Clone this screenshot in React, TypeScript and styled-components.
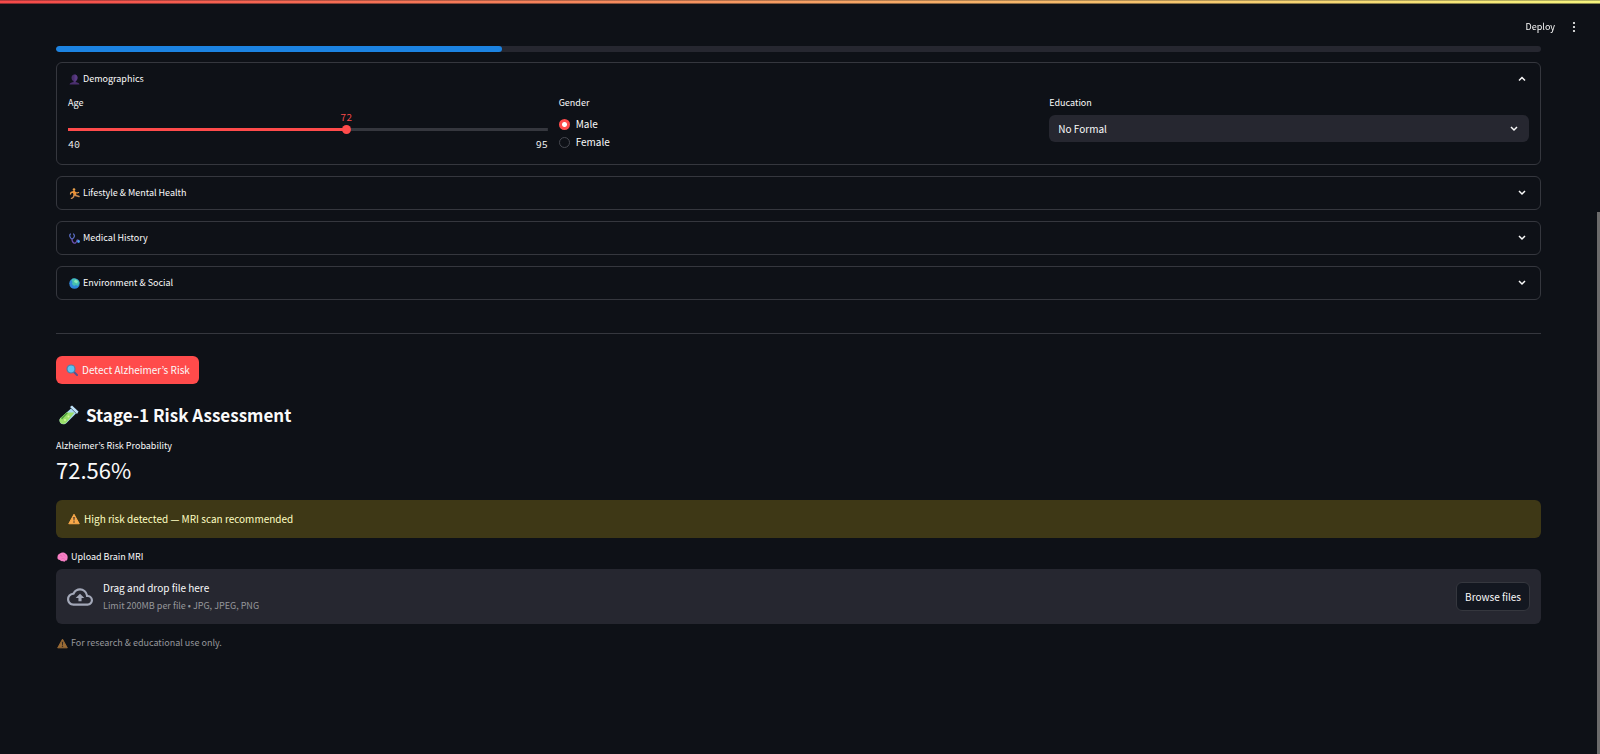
import React, { useRef, useState } from "react";
import styled, { createGlobalStyle } from "styled-components";

const sans = `"Source Sans Pro", "Noto Sans CJK KR", "Noto Sans", sans-serif`;
const mono = `"Source Code Pro", "DejaVu Sans Mono", monospace`;

const color = {
  page: "#0e1117",
  text: "#fafafa",
  primary: "#ff4b4b",
  border: "#35373e",
  surface: "#262730",
  info: "#1c83e1",
  muted: "#96979b",
};

const GlobalStyle = createGlobalStyle`
  *, *::before, *::after { box-sizing: border-box; }
  html { background: ${color.page}; scrollbar-width: none; }
  body { margin: 0; background: ${color.page}; color: ${color.text}; font-family: ${sans}; font-size: 10px; line-height: 16px; }
  button, select, input { font: inherit; color: inherit; }
`;

const Page = styled.div`
  min-height: 100vh;
  padding-right: 3px;
`;

const Decoration = styled.div`
  position: fixed;
  inset: 0 0 auto 0;
  height: 4px;
  background:
    linear-gradient(180deg, rgba(14, 17, 23, 0.45), transparent 40%, transparent 60%, rgba(14, 17, 23, 0.7)),
    linear-gradient(90deg, #ff4b4b, #fffd80);
`;

const Toolbar = styled.header`
  position: fixed;
  top: 16px;
  right: 20px;
  display: flex;
  align-items: center;
  gap: 13px;
`;

const ToolbarButton = styled.button`
  display: flex;
  align-items: center;
  padding: 0;
  border: 0;
  background: none;
  font-size: 9px;
  line-height: 22px;
`;

const ScrollThumb = styled.div`
  position: fixed;
  top: 212px;
  right: 0;
  bottom: 0;
  width: 3px;
  background: #6b6b6b;
`;

const Main = styled.main`
  padding: 46px 56px 100px;
`;

const Progress = styled.div`
  height: 6px;
  border-radius: 3px;
  background: ${color.surface};
  margin-bottom: 10px;
  overflow: hidden;
`;

const ProgressFill = styled.div`
  height: 100%;
  border-radius: 3px;
  background: ${color.info};
`;

const Stack = styled.div`
  display: flex;
  flex-direction: column;
  gap: 11px;
`;

const Panel = styled.section`
  border: 1px solid ${color.border};
  border-radius: 6px;
`;

const PanelHeader = styled.button`
  display: flex;
  align-items: center;
  justify-content: space-between;
  width: 100%;
  height: 32px;
  padding: 0 12px;
  border: 0;
  background: none;
  font-size: 9px;
`;

const IconText = styled.span<{ $gap?: number }>`
  display: flex;
  align-items: center;
  gap: ${(p) => p.$gap ?? 3}px;
`;

const PanelBody = styled.div`
  display: grid;
  grid-template-columns: repeat(3, 1fr);
  gap: 11px;
  padding: 0 11px 12px;
`;

const Label = styled.label`
  display: block;
  font-size: 9px;
  line-height: 16px;
`;

const UploadLabel = styled(Label)`
  padding-left: 1px;
`;

const Fieldset = styled.fieldset`
  min-width: 0;
  margin: 0;
  padding: 0;
  border: 0;
`;

const Legend = styled.legend`
  padding: 0;
  margin-bottom: 4px;
  font-size: 9px;
  line-height: 16px;
`;

const SliderValueRow = styled.div`
  position: relative;
  height: 14px;
  margin: 0 5px;
`;

const SliderValue = styled.output`
  position: absolute;
  transform: translateX(-50%);
  color: ${color.primary};
  font-family: ${mono};
  font-size: 10px;
  line-height: 14px;
`;

const Range = styled.input`
  display: block;
  appearance: none;
  width: 100%;
  height: 9px;
  margin: 0 0 4px;
  background: linear-gradient(90deg, ${color.primary} var(--fill), ${color.border} var(--fill)) center / 100% 3px no-repeat;
  &::-webkit-slider-thumb {
    appearance: none;
    width: 9px;
    height: 9px;
    border-radius: 50%;
    background: ${color.primary};
  }
`;

const SliderBounds = styled.div`
  display: flex;
  justify-content: space-between;
  font-family: ${mono};
  font-size: 10px;
  line-height: 14px;
`;

const RadioLabel = styled.label`
  display: flex;
  align-items: center;
  gap: 6px;
  height: 18px;
`;

const Radio = styled.input`
  appearance: none;
  width: 11px;
  height: 11px;
  margin: 0;
  border: 1px solid #474951;
  border-radius: 50%;
  &:checked {
    border: 0;
    background: radial-gradient(circle, #fff 2px, ${color.primary} 3px);
  }
`;

const SelectBox = styled.div`
  display: grid;
  align-items: center;
  margin-top: 4px;
  & > * { grid-area: 1 / 1; }
  & > svg { justify-self: end; margin-right: 9px; pointer-events: none; }
`;

const Select = styled.select`
  appearance: none;
  width: 100%;
  height: 27px;
  padding: 0 9px;
  border: 0;
  border-radius: 6px;
  background: ${color.surface};
`;

const Divider = styled.hr`
  height: 1px;
  margin: 33px 0 22px;
  border: 0;
  background: ${color.border};
`;

const PrimaryButton = styled.button`
  display: flex;
  align-items: center;
  height: 28px;
  padding: 0 9px 0 10px;
  border: 0;
  border-radius: 6px;
  background: ${color.primary};
`;

const Heading = styled.h3`
  display: flex;
  align-items: center;
  gap: 7px;
  margin: 17px 0 9px;
  padding-left: 3px;
  font-size: 17px;
  font-weight: 600;
  line-height: 28px;
`;

const MetricLabel = styled.div`
  font-size: 9px;
  line-height: 16px;
`;

const MetricValue = styled.div`
  font-size: 22px;
  line-height: 30px;
`;

const Alert = styled.div`
  display: flex;
  align-items: center;
  height: 38px;
  margin: 16px 0 11px;
  padding: 0 12px;
  border-radius: 6px;
  background: #3e3816;
  color: #ffffc2;
`;

const Uploader = styled.div`
  display: flex;
  align-items: center;
  gap: 10px;
  height: 55px;
  margin: 4px 0 11px;
  padding: 0 11px;
  border-radius: 6px;
  background: ${color.surface};
`;

const UploaderText = styled.div`
  flex: 1;
  line-height: 18px;
`;

const Hint = styled.div`
  color: ${color.muted};
  font-size: 9px;
  line-height: 18px;
`;

const SecondaryButton = styled.button`
  height: 29px;
  padding: 0 8px;
  border: 1px solid ${color.border};
  border-radius: 6px;
  background: #131720;
`;

const Caption = styled.p`
  margin: 0;
  padding-left: 1px;
  color: ${color.muted};
  font-size: 9px;
  line-height: 16px;
`;

const FadedIcon = styled.span`
  display: flex;
  opacity: 0.6;
`;

const Chevron = ({ up = false }: { up?: boolean }) => (
  <svg width="12" height="12" viewBox="0 0 12 12" fill="none" stroke="#fafafa" strokeWidth="1.5" aria-hidden="true">
    <path d={up ? "M3 7.500 6 4.500 9 7.500" : "M3 4 6 7 9 4"} />
  </svg>
);

const Dots = () => (
  <svg width="12" height="12" viewBox="0 0 12 12" fill="#fafafa" aria-hidden="true">
    <circle cx="6" cy="2" r="1.1" />
    <circle cx="6" cy="6" r="1.1" />
    <circle cx="6" cy="10" r="1.1" />
  </svg>
);

const PersonIcon = () => (
  <svg width="11" height="11" viewBox="0 0 22 22" aria-hidden="true">
    <path d="M11 1c-4 0-6 3-6 6s1 6 4 7v2c-3 1-7 1-8 5h20c-1-4-5-4-8-5v-2c3-1 4-4 4-7s-2-6-6-6z" fill="#4a2f6e" />
    <path d="M11 1c4 0 6 3 6 6s-1 6-4 7v2l-2 1z" fill="#5b3b85" />
  </svg>
);

const RunnerIcon = () => (
  <svg width="11" height="11" viewBox="0 0 22 22" fill="none" strokeLinecap="round" strokeLinejoin="round" aria-hidden="true">
    <circle cx="10" cy="3" r="2.600" fill="#e8a04c" />
    <path d="M10 8 12 13" stroke="#f09030" strokeWidth="5.500" />
    <path d="M8 8 4 9 3 12M13 9l3 1 3-1" stroke="#e89a48" strokeWidth="2.600" />
    <path d="m13 15 4 1 3 1M10 14l-1 4-4 3" stroke="#c98850" strokeWidth="3" />
  </svg>
);

const StethoscopeIcon = () => (
  <svg width="11" height="11" viewBox="0 0 22 22" fill="none" strokeLinecap="round" aria-hidden="true">
    <path d="M3 2C0 4 2 11 6 12c5-1 6-8 3-10" stroke="#5c70c8" strokeWidth="2.400" />
    <path d="M6 12c0 10 8 10 9 5 1-4 4-4 4-1" stroke="#6a4fb0" strokeWidth="2.400" />
    <circle cx="19" cy="17" r="2.800" fill="#4a9af0" />
  </svg>
);

const GlobeIcon = () => (
  <svg width="11" height="11" viewBox="0 0 22 22" aria-hidden="true">
    <circle cx="11" cy="11" r="10.500" fill="#2f86d8" />
    <path d="M7 1c6-1 12 2 14 8l-3 7-4-2-4 2-4-4 1-4-2-3z" fill="#45c0b0" />
    <path d="M12 3l6 3-2 5-6-3z" fill="#8be8b8" />
  </svg>
);

const MagnifierIcon = () => (
  <svg width="12" height="12" viewBox="0 0 24 24" aria-hidden="true">
    <path d="m15 15 7 7" stroke="#57548f" strokeWidth="4" strokeLinecap="round" />
    <circle cx="10" cy="10" r="8" fill="#5cc3f2" stroke="#4c7fa8" strokeWidth="2.400" />
  </svg>
);

const TestTubeIcon = () => (
  <svg width="20" height="20" viewBox="0 0 40 40" aria-hidden="true">
    <path d="M24 7 34 17 15 36c-4 4-14 4-14-6 0-1 1-3 2-4z" fill="#a9d9f2" />
    <path d="M15 15h16L14 36c-5 4-13 2-13-5 0-2 1-4 2-5z" fill="#9be06a" />
    <path d="M4 26 15 15l3 1L6 29z" fill="#4f9e3c" />
    <path d="M22 4 26 1 39 13 36 18z" fill="#bfe3fa" />
    <circle cx="12" cy="30" r="2" fill="#d3f7a0" />
    <circle cx="19" cy="23" r="2" fill="#d3f7a0" />
  </svg>
);

const WarningIcon = ({ size = 12 }: { size?: number }) => (
  <svg width={size} height={size} viewBox="0 0 24 24" aria-hidden="true">
    <path d="M12 2.500 22.500 21.500H1.500z" fill="#f9a94a" stroke="#f9a94a" strokeWidth="2" strokeLinejoin="round" />
    <path d="M10.500 8h3l-.6 7h-1.800z" fill="#4a3a2e" />
    <circle cx="12" cy="18" r="1.600" fill="#4a3a2e" />
  </svg>
);

const BrainIcon = () => (
  <svg width="11" height="11" viewBox="0 0 22 22" aria-hidden="true">
    <path d="M6 3c3-3 9-2 11 0 4 2 5 7 4 10 0 3-2 5-4 4-1 3-4 3-5 1-3 1-5 0-6-2-4 0-6-3-5-6 0-4 2-6 5-7z" fill="#f77fc4" />
    <path d="M6 7c3-1 4 1 4 3M13 4c0 3 3 3 4 5M9 14c2-2 5-1 7 1" fill="none" stroke="#e066b0" strokeWidth="1.300" />
  </svg>
);

const CloudUploadIcon = () => (
  <svg width="26" height="26" viewBox="0 0 24 24" fill="#a3a8b8" aria-hidden="true">
    <path d="M19.350 10.040A7.490 7.490 0 0 0 12 4C9.110 4 6.600 5.640 5.350 8.040A5.994 5.994 0 0 0 0 14c0 3.310 2.690 6 6 6h13c2.760 0 5-2.240 5-5 0-2.640-2.050-4.780-4.650-4.960zM19 18H6c-2.210 0-4-1.790-4-4 0-2.050 1.530-3.760 3.560-3.970l1.070-.11.500-.95A5.469 5.469 0 0 1 12 6c2.620 0 4.880 1.860 5.390 4.430l.3 1.500 1.530.11A2.980 2.980 0 0 1 22 15c0 1.650-1.350 3-3 3zM8 13h2.550v3h2.900v-3H16l-4-4z" />
  </svg>
);

const MIN_AGE = 40;
const MAX_AGE = 95;

function Demographics() {
  const [age, setAge] = useState(72);
  const [gender, setGender] = useState("Male");
  const fill = `${((age - MIN_AGE) / (MAX_AGE - MIN_AGE)) * 100}%`;
  return (
    <PanelBody>
      <div>
        <Label htmlFor="age">Age</Label>
        <SliderValueRow>
          <SliderValue htmlFor="age" style={{ left: fill }}>{age}</SliderValue>
        </SliderValueRow>
        <Range
          id="age"
          type="range"
          min={MIN_AGE}
          max={MAX_AGE}
          value={age}
          onChange={(e) => setAge(Number(e.target.value))}
          style={{ "--fill": fill } as React.CSSProperties}
        />
        <SliderBounds>
          <span>{MIN_AGE}</span>
          <span>{MAX_AGE}</span>
        </SliderBounds>
      </div>
      <Fieldset>
        <Legend>Gender</Legend>
        {["Male", "Female"].map((option) => (
          <RadioLabel key={option}>
            <Radio type="radio" name="gender" checked={gender === option} onChange={() => setGender(option)} />
            {option}
          </RadioLabel>
        ))}
      </Fieldset>
      <div>
        <Label htmlFor="education">Education</Label>
        <SelectBox>
          <Select id="education" defaultValue="No Formal">
            <option>No Formal</option>
            <option>Primary</option>
            <option>Secondary</option>
            <option>Graduate</option>
          </Select>
          <Chevron />
        </SelectBox>
      </div>
    </PanelBody>
  );
}

interface ExpanderProps {
  icon: React.ReactNode;
  title: string;
  initiallyOpen?: boolean;
  children?: React.ReactNode;
}

function Expander({ icon, title, initiallyOpen = false, children }: ExpanderProps) {
  const [open, setOpen] = useState(initiallyOpen);
  return (
    <Panel>
      <PanelHeader type="button" aria-expanded={open} onClick={() => setOpen(!open)}>
        <IconText>{icon}{title}</IconText>
        <Chevron up={open} />
      </PanelHeader>
      {open && children}
    </Panel>
  );
}

export default function App() {
  const fileInput = useRef<HTMLInputElement>(null);
  return (
    <Page>
      <GlobalStyle />
      <Decoration />
      <Toolbar>
        <ToolbarButton type="button">Deploy</ToolbarButton>
        <ToolbarButton type="button" aria-label="Main menu"><Dots /></ToolbarButton>
      </Toolbar>
      <Main>
        <Progress role="progressbar" aria-valuenow={30} aria-valuemin={0} aria-valuemax={100}>
          <ProgressFill style={{ width: "30%" }} />
        </Progress>
        <Stack>
          <Expander icon={<PersonIcon />} title="Demographics" initiallyOpen>
            <Demographics />
          </Expander>
          <Expander icon={<RunnerIcon />} title="Lifestyle & Mental Health" />
          <Expander icon={<StethoscopeIcon />} title="Medical History" />
          <Expander icon={<GlobeIcon />} title="Environment & Social" />
        </Stack>
        <Divider />
        <PrimaryButton type="button">
          <IconText $gap={4}><MagnifierIcon />Detect Alzheimer’s Risk</IconText>
        </PrimaryButton>
        <Heading><TestTubeIcon />Stage-1 Risk Assessment</Heading>
        <MetricLabel>Alzheimer’s Risk Probability</MetricLabel>
        <MetricValue>72.56%</MetricValue>
        <Alert role="alert">
          <IconText $gap={4}><WarningIcon />High risk detected — MRI scan recommended</IconText>
        </Alert>
        <UploadLabel htmlFor="mri"><IconText><BrainIcon />Upload Brain MRI</IconText></UploadLabel>
        <Uploader>
          <CloudUploadIcon />
          <UploaderText>
            Drag and drop file here
            <Hint>Limit 200MB per file • JPG, JPEG, PNG</Hint>
          </UploaderText>
          <input id="mri" ref={fileInput} type="file" accept=".jpg,.jpeg,.png" hidden />
          <SecondaryButton type="button" onClick={() => fileInput.current?.click()}>Browse files</SecondaryButton>
        </Uploader>
        <Caption>
          <IconText><FadedIcon><WarningIcon size={11} /></FadedIcon>For research &amp; educational use only.</IconText>
        </Caption>
      </Main>
      <ScrollThumb />
    </Page>
  );
}
